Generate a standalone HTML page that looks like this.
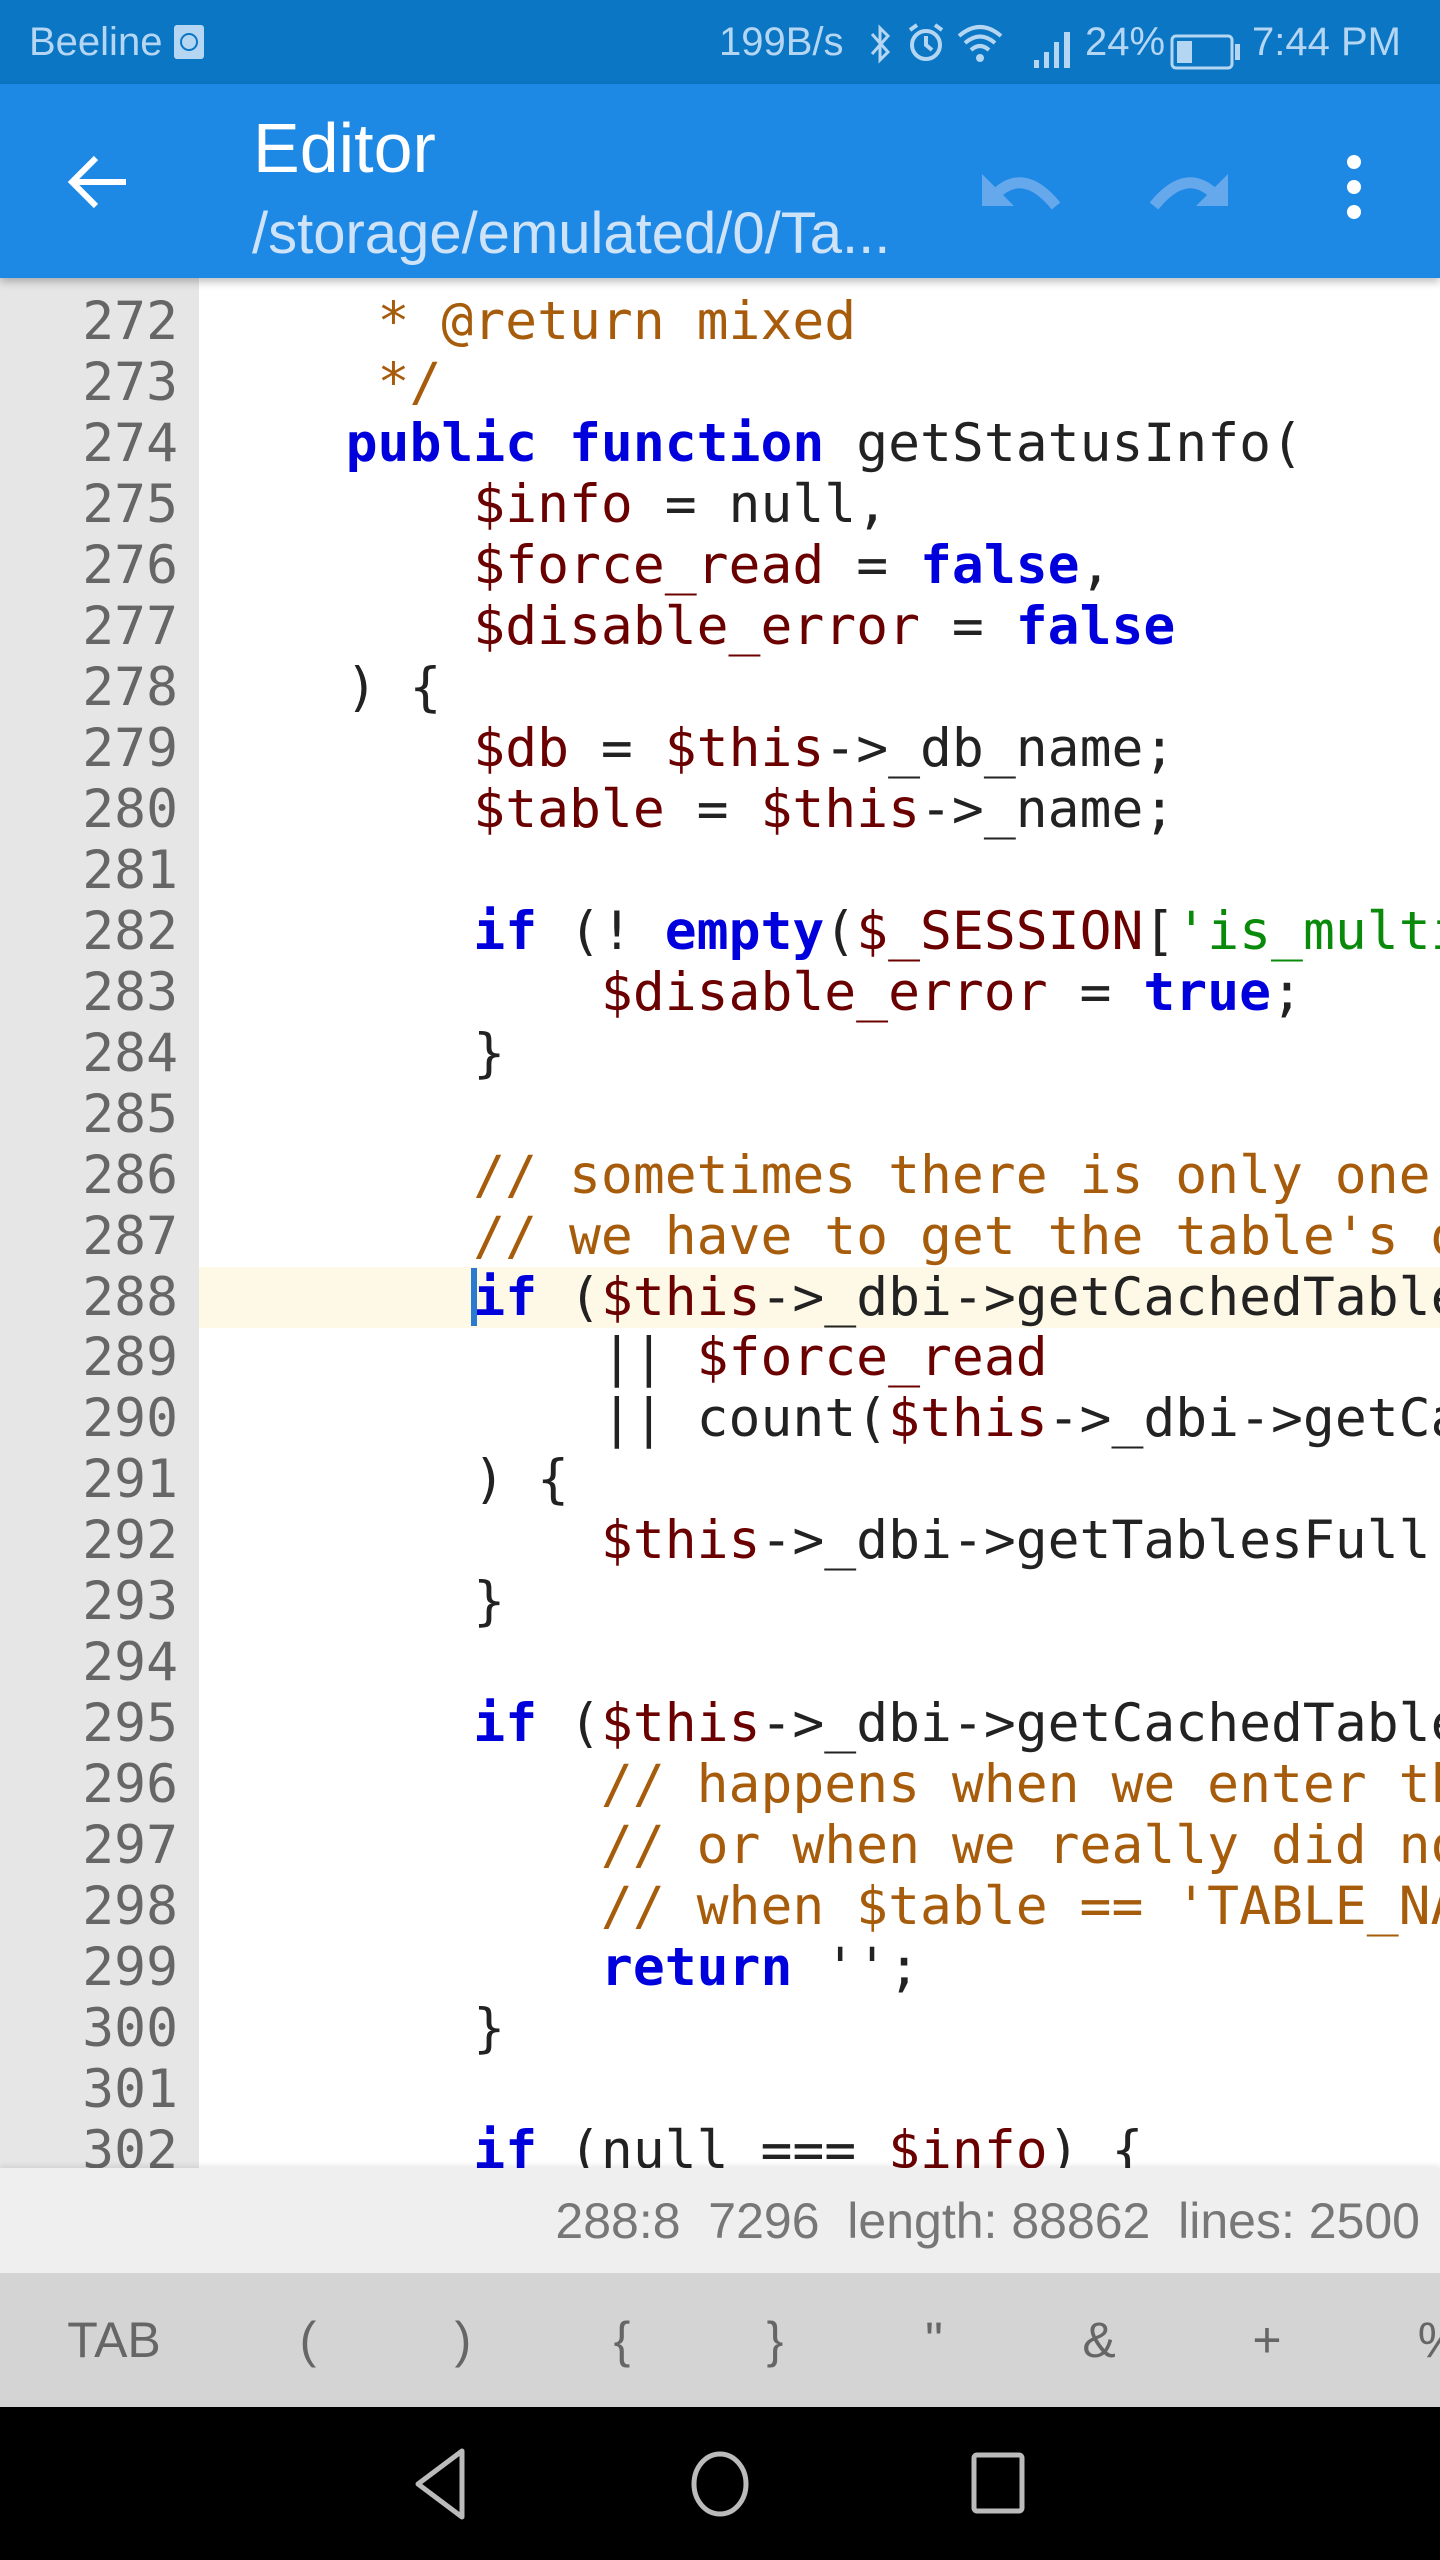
<!DOCTYPE html>
<html><head><meta charset="utf-8"><style>
*{margin:0;padding:0;box-sizing:border-box}
body{width:1440px;height:2560px;overflow:hidden;background:#fff;font-family:"Liberation Sans",sans-serif;position:relative}
.sb{position:absolute;top:0;left:0;width:1440px;height:84px;background:#0b76c4;color:#b5d6f2;font-size:40px}
.sb span{position:absolute;top:20px}
.tb{position:absolute;top:84px;left:0;width:1440px;height:194px;background:#1e88e5;box-shadow:0 4px 8px rgba(0,0,0,.25);z-index:3}
.title{position:absolute;left:253px;top:24px;color:#fff;font-size:70px}
.sub{position:absolute;left:252px;top:116px;color:#cfe3f8;font-size:58px}
.code{position:absolute;top:278px;left:0;width:1440px;height:1890px;overflow:hidden;background:#fff}
.gut{position:absolute;left:0;top:0;width:199px;height:100%;background:#e6e6e6}
.ln{position:absolute;left:0;top:14px;width:178px;text-align:right;font-family:"DejaVu Sans Mono",monospace;font-size:53px;line-height:60.97px;color:#666;white-space:pre}
.hl{position:absolute;left:199px;top:989px;width:1241px;height:61px;background:#fdf9e6}
.cur{position:absolute;left:471px;top:990px;width:6px;height:58px;background:#2a7ad0}
pre{position:absolute;left:218px;top:14px;font-family:"DejaVu Sans Mono",monospace;font-size:53px;line-height:60.97px;color:#222;white-space:pre}
.k{color:#0000dd;font-weight:bold}.v{color:#6b0000}.c{color:#a65c0a}.s{color:#0a8a0a}
.st{position:absolute;top:2168px;left:0;width:1440px;height:105px;background:#efefef;box-shadow:0 -3px 5px rgba(0,0,0,.08);color:#777;font-size:50px}
.kb{position:absolute;top:2273px;left:0;width:1440px;height:134px;background:#d4d4d4;color:#666;font-size:50px}
.kb span{position:absolute;top:38px;transform:translateX(-50%)}
.nav{position:absolute;top:2407px;left:0;width:1440px;height:153px;background:#000}
</style></head><body>
<div class="sb">
<span style="left:29px">Beeline</span>
<svg style="position:absolute;left:173px;top:24px" width="32" height="36"><rect x="1" y="1" width="30" height="34" rx="3" fill="#b5d6f2"/><circle cx="16" cy="18" r="8" fill="none" stroke="#0b76c4" stroke-width="2"/></svg>
<span style="left:719px">199B/s</span>
<svg style="position:absolute;left:866px;top:24px" width="30" height="40"><path d="M6 10 L22 28 L14 36 V4 L22 12 L6 30" fill="none" stroke="#b5d6f2" stroke-width="3"/></svg>
<svg style="position:absolute;left:906px;top:22px" width="40" height="42"><circle cx="20" cy="23" r="14" fill="none" stroke="#b5d6f2" stroke-width="4"/><path d="M20 14V23L26 28M4 8L11 3M36 8L29 3" fill="none" stroke="#b5d6f2" stroke-width="4"/></svg>
<svg style="position:absolute;left:956px;top:22px" width="50" height="44"><path d="M3 14Q24-4 45 14M9 21Q24 8 39 21M15 28Q24 20 33 28" fill="none" stroke="#b5d6f2" stroke-width="4"/><circle cx="24" cy="36" r="4" fill="#b5d6f2"/></svg>
<svg style="position:absolute;left:1033px;top:30px" width="44" height="40"><rect x="1" y="30" width="5" height="8" fill="#b5d6f2"/><rect x="11" y="22" width="5" height="16" fill="#b5d6f2"/><rect x="21" y="12" width="5" height="26" fill="#b5d6f2"/><rect x="31" y="2" width="6" height="36" fill="#b5d6f2"/></svg>
<span style="left:1085px">24%</span>
<svg style="position:absolute;left:1170px;top:34px" width="72" height="36"><rect x="2" y="2" width="60" height="32" rx="4" fill="none" stroke="#b5d6f2" stroke-width="3"/><rect x="7" y="7" width="15" height="22" fill="#b5d6f2"/><rect x="65" y="10" width="5" height="16" fill="#b5d6f2"/></svg>
<span style="left:1252px">7:44 PM</span>
</div>
<div class="tb">
<svg style="position:absolute;left:66px;top:70px" width="64" height="56"><path d="M60 28H8M30 4L6 28L30 52" fill="none" stroke="#fff" stroke-width="6"/></svg>
<div class="title">Editor</div>
<div class="sub">/storage/emulated/0/Ta...</div>
<svg style="position:absolute;left:978px;top:76px" width="86" height="50"><path d="M4 14V46H36Z" fill="#66a8ec"/><path d="M14 38Q44 4 78 46" fill="none" stroke="#66a8ec" stroke-width="11"/></svg>
<svg style="position:absolute;left:1146px;top:76px" width="86" height="50"><path d="M82 14V46H50Z" fill="#66a8ec"/><path d="M72 38Q42 4 8 46" fill="none" stroke="#66a8ec" stroke-width="11"/></svg>
<svg style="position:absolute;left:1342px;top:68px" width="24" height="70"><circle cx="12" cy="10" r="7" fill="#fff"/><circle cx="12" cy="35" r="7" fill="#fff"/><circle cx="12" cy="60" r="7" fill="#fff"/></svg>
</div>
<div class="code">
<div class="gut"></div>
<div class="ln">272
273
274
275
276
277
278
279
280
281
282
283
284
285
286
287
288
289
290
291
292
293
294
295
296
297
298
299
300
301
302</div>
<div class="hl"></div>
<pre><span class="c">     * @return mixed</span>
<span class="c">     */</span>
    <span class="k">public</span> <span class="k">function</span> getStatusInfo(
        <span class="v">$info</span> = null,
        <span class="v">$force_read</span> = <span class="k">false</span>,
        <span class="v">$disable_error</span> = <span class="k">false</span>
    ) {
        <span class="v">$db</span> = <span class="v">$this</span>-&gt;_db_name;
        <span class="v">$table</span> = <span class="v">$this</span>-&gt;_name;

        <span class="k">if</span> (! <span class="k">empty</span>(<span class="v">$_SESSION</span>[<span class="s">'is_multi_server'</span>])) {
            <span class="v">$disable_error</span> = <span class="k">true</span>;
        }

<span class="c">        // sometimes there is only one table</span>
<span class="c">        // we have to get the table's details</span>
        <span class="k">if</span> (<span class="v">$this</span>-&gt;_dbi-&gt;getCachedTableContent(
            || <span class="v">$force_read</span>
            || count(<span class="v">$this</span>-&gt;_dbi-&gt;getCachedTableContent(
        ) {
            <span class="v">$this</span>-&gt;_dbi-&gt;getTablesFull(<span class="v">$this</span>-&gt;_db_name
        }

        <span class="k">if</span> (<span class="v">$this</span>-&gt;_dbi-&gt;getCachedTableContent(
<span class="c">            // happens when we enter the table creation</span>
<span class="c">            // or when we really did not supply</span>
<span class="c">            // when $table == 'TABLE_NAME'</span>
            <span class="k">return</span> '';
        }

        <span class="k">if</span> (null === <span class="v">$info</span>) {</pre>
<div class="cur"></div>
</div>
<div class="st"><span style="position:absolute;right:20px;top:24px;white-space:pre">288:8  7296  length: 88862  lines: 2500</span></div>
<div class="kb">
<span style="left:114px">TAB</span><span style="left:308px">(</span><span style="left:463px">)</span><span style="left:622px">{</span><span style="left:775px">}</span><span style="left:934px">"</span><span style="left:1099px">&amp;</span><span style="left:1267px">+</span><span style="left:1440px">%</span>
</div>
<div class="nav">
<svg style="position:absolute;left:410px;top:40px" width="60" height="74"><path d="M52 4V70L8 37Z" fill="none" stroke="#bbb" stroke-width="5" stroke-linejoin="round"/></svg>
<svg style="position:absolute;left:688px;top:42px" width="64" height="70"><ellipse cx="32" cy="35" rx="26" ry="30" fill="none" stroke="#bbb" stroke-width="5"/></svg>
<svg style="position:absolute;left:970px;top:44px" width="60" height="66"><rect x="4" y="4" width="48" height="56" rx="3" fill="none" stroke="#bbb" stroke-width="5"/></svg>
</div>
</body></html>
